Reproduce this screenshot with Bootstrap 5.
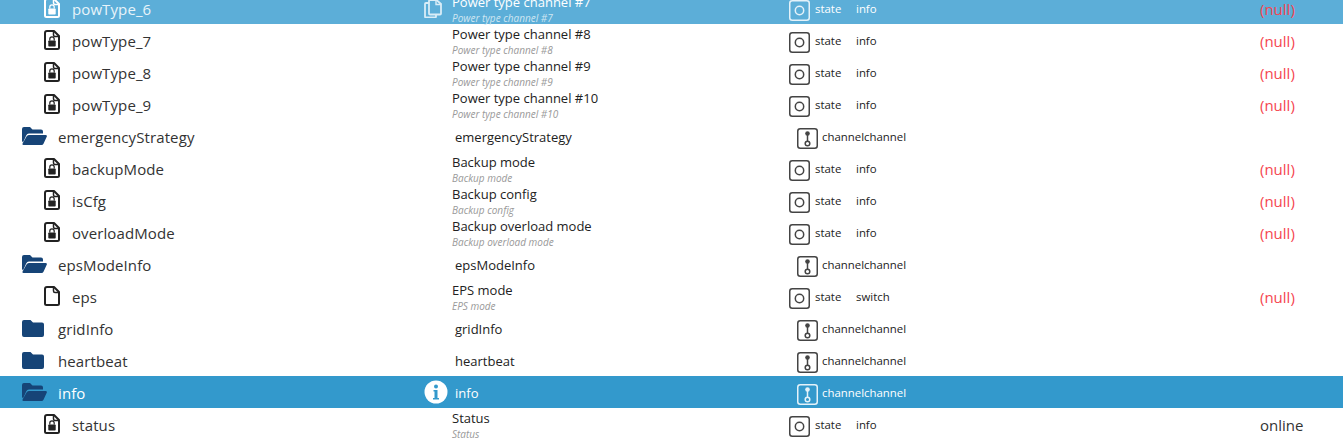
<!DOCTYPE html>
<html lang="en">
<head>
<meta charset="utf-8">
<title>Objects</title>
<link href="https://cdn.jsdelivr.net/npm/bootstrap@5.3.0/dist/css/bootstrap.min.css" rel="stylesheet">
<style>
html,body{height:448px;overflow:hidden;background:#fff}
body{font-family:"Open Sans","Noto Sans",sans-serif;color:#333}
.obj-tree{margin-top:-8px}
.obj-row{height:32px;white-space:nowrap}
.obj-row.is-hover{background:#5caed8;color:#e8f4fa}
.obj-row.is-sel{background:#3399cc;color:#fff}
.col-name{width:424px;font-size:15px;letter-spacing:.1px}
.col-name .lbl{padding-top:2px}
.lvl-1{padding-left:22px}
.lvl-2{padding-left:44px}
.lvl-1 .lbl{margin-left:11px}
.lvl-2 .lbl{margin-left:12px}
.col-act{width:28px}
.col-title{width:337px;color:#222;padding-top:2px}
.is-hover .col-title,.is-sel .col-title{color:#fff}
.title-main{font-size:13px;line-height:16px}
.title-sub{font-size:10px;line-height:14px;margin-top:1px;font-style:italic;color:#999}
.is-hover .title-sub{color:#cfe6f2}
.col-title.title-plain{font-size:13px;padding-left:3px;padding-top:4px}
.col-type{width:471px;font-size:11.4px;color:#222;padding-top:2px}
.is-hover .col-type,.is-sel .col-type{color:#fff}
.ic-type{color:#444;margin-top:2px}
.is-hover .ic-type,.is-sel .ic-type{color:#e4f2f9}
.t-role{margin-left:5px;width:41px}
.chan{padding-left:8px}
.chan span{margin-left:4px}
.col-val{font-size:15px;padding-top:2px}
.nullv{color:#f5454f}
.ic-doc{color:#222}
.is-hover .ic-doc{color:#fff}
.ic-folder{color:#164477}
.ic-copy{color:#d9edf7}
</style>
</head>
<body>
<svg width="0" height="0" class="position-absolute">
<defs>
<symbol id="i-file" viewBox="0 0 16 20"><path d="M3 1h7l5 5v11.5a1.5 1.5 0 0 1-1.500 1.500H2.500A1.500 1.500 0 0 1 1 17.500V3a2 2 0 0 1 2-2z" fill="none" stroke="currentColor" stroke-width="2" stroke-linejoin="round"/><path d="M9.500 1v4a1.500 1.500 0 0 0 1.500 1.500h4" fill="none" stroke="currentColor" stroke-width="1.500"/></symbol>
<symbol id="i-lock" viewBox="0 0 16 20"><path d="M3 1h7l5 5v11.500a1.500 1.500 0 0 1-1.500 1.500H2.500A1.500 1.500 0 0 1 1 17.500V3a2 2 0 0 1 2-2z" fill="none" stroke="currentColor" stroke-width="2" stroke-linejoin="round"/><path d="M9.500 1v4a1.500 1.500 0 0 0 1.500 1.500h4" fill="none" stroke="currentColor" stroke-width="1.500"/><rect x="4.300" y="10.500" width="7.400" height="6" rx=".8" fill="currentColor"/><path d="M5.800 10.500V9a2.200 2.200 0 0 1 4.400 0v1.500" fill="none" stroke="currentColor" stroke-width="1.200"/></symbol>
<symbol id="i-fclosed" viewBox="0 0 25 17"><path d="M2 0h6.500l2.500 2.500h9a2 2 0 0 1 2 2V15a2 2 0 0 1-2 2H2a2 2 0 0 1-2-2V2a2 2 0 0 1 2-2z" fill="currentColor"/></symbol>
<symbol id="i-fopen" viewBox="0 0 25 18"><path d="M2 0h6l2.500 2.500H19a2 2 0 0 1 2 2V6.500H7a3 3 0 0 0-2.800 1.900L1 15.500 0 14V2a2 2 0 0 1 2-2z" fill="currentColor"/><path d="M6.800 8H23.500a1.300 1.300 0 0 1 1.200 1.800L21.500 16.700A2.200 2.200 0 0 1 19.500 18H1.500a1 1 0 0 1-.9-1.400L4.500 9.500A3 3 0 0 1 6.800 8z" fill="currentColor"/></symbol>
<symbol id="i-state" viewBox="0 0 21 21"><rect x=".75" y=".75" width="19.500" height="19.500" rx="2.500" fill="none" stroke="currentColor" stroke-width="1.500"/><circle cx="10.500" cy="10.500" r="4.200" fill="none" stroke="currentColor" stroke-width="1.500"/></symbol>
<symbol id="i-chan" viewBox="0 0 21 21"><rect x=".75" y=".75" width="19.500" height="19.500" rx="2.500" fill="none" stroke="currentColor" stroke-width="1.500"/><circle cx="10.500" cy="5.500" r="2.300" fill="currentColor"/><path d="M10.500 6v7" stroke="currentColor" stroke-width="1.500"/><circle cx="10.500" cy="15.500" r="2.300" fill="none" stroke="currentColor" stroke-width="1.500"/></symbol>
<symbol id="i-copy" viewBox="0 0 18 19"><path d="M6 1h6.500L17 5v9.500a1 1 0 0 1-1 1H6a1 1 0 0 1-1-1V2a1 1 0 0 1 1-1z" fill="none" stroke="currentColor" stroke-width="1.800"/><path d="M12 1v4.500h5" fill="none" stroke="currentColor" stroke-width="1.400"/><path d="M5 4H2a1 1 0 0 0-1 1v12.500a1 1 0 0 0 1 1h9a1 1 0 0 0 1-1v-2" fill="none" stroke="currentColor" stroke-width="1.800"/></symbol>
</defs>
</svg>

<div class="obj-tree">

<div class="obj-row is-hover d-flex align-items-center">
 <div class="col-name lvl-2 d-flex align-items-center"><svg class="ic-doc" width="16" height="20"><use href="#i-lock"/></svg><span class="lbl">powType_6</span></div>
 <div class="col-act d-flex"><svg class="ic-copy" width="18" height="19"><use href="#i-copy"/></svg></div>
 <div class="col-title"><div class="title-main">Power type channel #7</div><div class="title-sub">Power type channel #7</div></div>
 <div class="col-type d-flex align-items-center"><svg class="ic-type" width="21" height="21"><use href="#i-state"/></svg><span class="t-role">state</span><span>info</span></div>
 <div class="col-val nullv">(null)</div>
</div>

<div class="obj-row d-flex align-items-center">
 <div class="col-name lvl-2 d-flex align-items-center"><svg class="ic-doc" width="16" height="20"><use href="#i-lock"/></svg><span class="lbl">powType_7</span></div>
 <div class="col-act"></div>
 <div class="col-title"><div class="title-main">Power type channel #8</div><div class="title-sub">Power type channel #8</div></div>
 <div class="col-type d-flex align-items-center"><svg class="ic-type" width="21" height="21"><use href="#i-state"/></svg><span class="t-role">state</span><span>info</span></div>
 <div class="col-val nullv">(null)</div>
</div>

<div class="obj-row d-flex align-items-center">
 <div class="col-name lvl-2 d-flex align-items-center"><svg class="ic-doc" width="16" height="20"><use href="#i-lock"/></svg><span class="lbl">powType_8</span></div>
 <div class="col-act"></div>
 <div class="col-title"><div class="title-main">Power type channel #9</div><div class="title-sub">Power type channel #9</div></div>
 <div class="col-type d-flex align-items-center"><svg class="ic-type" width="21" height="21"><use href="#i-state"/></svg><span class="t-role">state</span><span>info</span></div>
 <div class="col-val nullv">(null)</div>
</div>

<div class="obj-row d-flex align-items-center">
 <div class="col-name lvl-2 d-flex align-items-center"><svg class="ic-doc" width="16" height="20"><use href="#i-lock"/></svg><span class="lbl">powType_9</span></div>
 <div class="col-act"></div>
 <div class="col-title"><div class="title-main">Power type channel #10</div><div class="title-sub">Power type channel #10</div></div>
 <div class="col-type d-flex align-items-center"><svg class="ic-type" width="21" height="21"><use href="#i-state"/></svg><span class="t-role">state</span><span>info</span></div>
 <div class="col-val nullv">(null)</div>
</div>

<div class="obj-row d-flex align-items-center">
 <div class="col-name lvl-1 d-flex align-items-center"><svg class="ic-folder" width="25" height="18"><use href="#i-fopen"/></svg><span class="lbl">emergencyStrategy</span></div>
 <div class="col-act"></div>
 <div class="col-title title-plain">emergencyStrategy</div>
 <div class="col-type chan d-flex align-items-center"><svg class="ic-type" width="21" height="21"><use href="#i-chan"/></svg><span>channelchannel</span></div>
 <div class="col-val"></div>
</div>

<div class="obj-row d-flex align-items-center">
 <div class="col-name lvl-2 d-flex align-items-center"><svg class="ic-doc" width="16" height="20"><use href="#i-lock"/></svg><span class="lbl">backupMode</span></div>
 <div class="col-act"></div>
 <div class="col-title"><div class="title-main">Backup mode</div><div class="title-sub">Backup mode</div></div>
 <div class="col-type d-flex align-items-center"><svg class="ic-type" width="21" height="21"><use href="#i-state"/></svg><span class="t-role">state</span><span>info</span></div>
 <div class="col-val nullv">(null)</div>
</div>

<div class="obj-row d-flex align-items-center">
 <div class="col-name lvl-2 d-flex align-items-center"><svg class="ic-doc" width="16" height="20"><use href="#i-lock"/></svg><span class="lbl">isCfg</span></div>
 <div class="col-act"></div>
 <div class="col-title"><div class="title-main">Backup config</div><div class="title-sub">Backup config</div></div>
 <div class="col-type d-flex align-items-center"><svg class="ic-type" width="21" height="21"><use href="#i-state"/></svg><span class="t-role">state</span><span>info</span></div>
 <div class="col-val nullv">(null)</div>
</div>

<div class="obj-row d-flex align-items-center">
 <div class="col-name lvl-2 d-flex align-items-center"><svg class="ic-doc" width="16" height="20"><use href="#i-lock"/></svg><span class="lbl">overloadMode</span></div>
 <div class="col-act"></div>
 <div class="col-title"><div class="title-main">Backup overload mode</div><div class="title-sub">Backup overload mode</div></div>
 <div class="col-type d-flex align-items-center"><svg class="ic-type" width="21" height="21"><use href="#i-state"/></svg><span class="t-role">state</span><span>info</span></div>
 <div class="col-val nullv">(null)</div>
</div>

<div class="obj-row d-flex align-items-center">
 <div class="col-name lvl-1 d-flex align-items-center"><svg class="ic-folder" width="25" height="18"><use href="#i-fopen"/></svg><span class="lbl">epsModeInfo</span></div>
 <div class="col-act"></div>
 <div class="col-title title-plain">epsModeInfo</div>
 <div class="col-type chan d-flex align-items-center"><svg class="ic-type" width="21" height="21"><use href="#i-chan"/></svg><span>channelchannel</span></div>
 <div class="col-val"></div>
</div>

<div class="obj-row d-flex align-items-center">
 <div class="col-name lvl-2 d-flex align-items-center"><svg class="ic-doc" width="16" height="20"><use href="#i-file"/></svg><span class="lbl">eps</span></div>
 <div class="col-act"></div>
 <div class="col-title"><div class="title-main">EPS mode</div><div class="title-sub">EPS mode</div></div>
 <div class="col-type d-flex align-items-center"><svg class="ic-type" width="21" height="21"><use href="#i-state"/></svg><span class="t-role">state</span><span>switch</span></div>
 <div class="col-val nullv">(null)</div>
</div>

<div class="obj-row d-flex align-items-center">
 <div class="col-name lvl-1 d-flex align-items-center"><svg class="ic-folder" width="25" height="17"><use href="#i-fclosed"/></svg><span class="lbl">gridInfo</span></div>
 <div class="col-act"></div>
 <div class="col-title title-plain">gridInfo</div>
 <div class="col-type chan d-flex align-items-center"><svg class="ic-type" width="21" height="21"><use href="#i-chan"/></svg><span>channelchannel</span></div>
 <div class="col-val"></div>
</div>

<div class="obj-row d-flex align-items-center">
 <div class="col-name lvl-1 d-flex align-items-center"><svg class="ic-folder" width="25" height="17"><use href="#i-fclosed"/></svg><span class="lbl">heartbeat</span></div>
 <div class="col-act"></div>
 <div class="col-title title-plain">heartbeat</div>
 <div class="col-type chan d-flex align-items-center"><svg class="ic-type" width="21" height="21"><use href="#i-chan"/></svg><span>channelchannel</span></div>
 <div class="col-val"></div>
</div>

<div class="obj-row is-sel d-flex align-items-center">
 <div class="col-name lvl-1 d-flex align-items-center"><svg class="ic-folder" width="25" height="18"><use href="#i-fopen"/></svg><span class="lbl">info</span></div>
 <div class="col-act d-flex"><svg width="24" height="24" viewBox="0 0 24 24"><circle cx="12" cy="12" r="11.500" fill="#fff"/><circle cx="12" cy="6.500" r="2" fill="#3399cc"/><path d="M9.500 10h4v8h1.500v1.500H9V18h1.500v-6.500h-1z" fill="#3399cc"/></svg></div>
 <div class="col-title title-plain">info</div>
 <div class="col-type chan d-flex align-items-center"><svg class="ic-type" width="21" height="21"><use href="#i-chan"/></svg><span>channelchannel</span></div>
 <div class="col-val"></div>
</div>

<div class="obj-row d-flex align-items-center">
 <div class="col-name lvl-2 d-flex align-items-center"><svg class="ic-doc" width="16" height="20"><use href="#i-lock"/></svg><span class="lbl">status</span></div>
 <div class="col-act"></div>
 <div class="col-title"><div class="title-main">Status</div><div class="title-sub">Status</div></div>
 <div class="col-type d-flex align-items-center"><svg class="ic-type" width="21" height="21"><use href="#i-state"/></svg><span class="t-role">state</span><span>info</span></div>
 <div class="col-val">online</div>
</div>

<div class="obj-row d-flex align-items-center">
 <div class="col-name lvl-1 d-flex align-items-center"><svg class="ic-folder" width="25" height="17"><use href="#i-fclosed"/></svg></div>
 <div class="col-act"></div>
 <div class="col-title"></div>
 <div class="col-type chan d-flex align-items-center"><svg class="ic-type" width="21" height="21"><use href="#i-chan"/></svg></div>
 <div class="col-val"></div>
</div>

</div>
<script src="https://cdn.jsdelivr.net/npm/bootstrap@5.3.0/dist/js/bootstrap.bundle.min.js"></script>
</body>
</html>
